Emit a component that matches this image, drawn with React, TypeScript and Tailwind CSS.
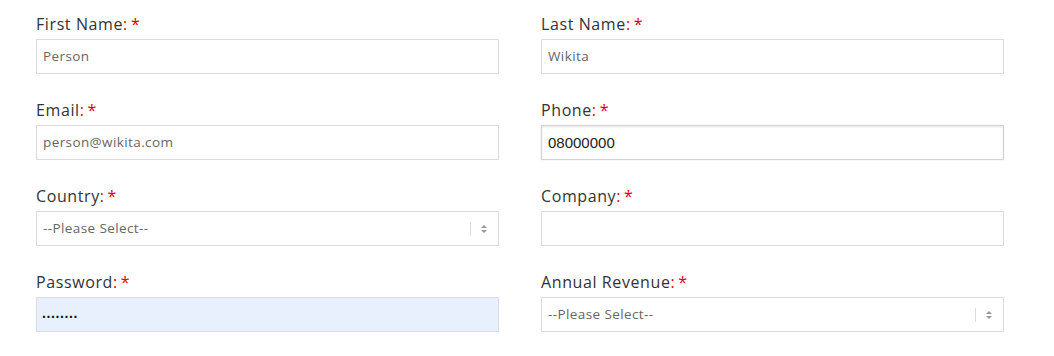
import React from "react";

type Field = {
  label: string;
  value?: string;
  kind?: "text" | "select" | "password" | "phone";
};

const fields: Field[] = [
  { label: "First Name", value: "Person" },
  { label: "Last Name", value: "Wikita" },
  { label: "Email", value: "person@wikita.com" },
  { label: "Phone", value: "08000000", kind: "phone" },
  { label: "Country", value: "--Please Select--", kind: "select" },
  { label: "Company", value: "" },
  { label: "Password", value: "........", kind: "password" },
  { label: "Annual Revenue", value: "--Please Select--", kind: "select" },
];

function Arrows() {
  return (
    <div className="flex h-full items-center">
      <span className="h-[14px] w-px bg-[#dcdcdc]" />
      <svg width="8" height="10" viewBox="0 0 8 10" className="ml-[9px] mr-[10px]">
        <path d="M1 4 L4 1 L7 4 Z" fill="#999" />
        <path d="M1 6 L4 9 L7 6 Z" fill="#999" />
      </svg>
    </div>
  );
}

function FormField({ f }: { f: Field }) {
  const base =
    "flex h-[35px] w-[463px] items-center border text-[13.5px] leading-none";
  let box = base + " border-[#dcdcdc] bg-white";
  if (f.kind === "password") box = base + " border-[#dcdcdc] bg-[#e8f0fe]";
  if (f.kind === "phone")
    box = base + " border-[#d3d3d3] bg-white shadow-[inset_0_1px_2px_rgba(0,0,0,0.12),0_0_2px_rgba(0,0,0,0.08)]";

  return (
    <div className="flex flex-col">
      <label className="mb-[4px] h-[22px] text-[16px] leading-[22px] tracking-[0.6px] text-[#333]">
        {f.label}
        <span className="text-[#e00000]">:</span>
        <span className="ml-[3px] text-[#e00000]">*</span>
      </label>
      <div className={box}>
        {f.kind === "phone" ? (
          <span className="pl-[6px] text-[15px] text-[#222] font-['Liberation_Sans',sans-serif]">
            {f.value}
          </span>
        ) : f.kind === "password" ? (
          <span className="pl-[5px] pb-[4px] text-[14px] font-bold tracking-[0.6px] text-[#111] font-['Liberation_Sans',sans-serif]">
            {f.value}
          </span>
        ) : (
          <span className="pl-[6px] tracking-[0.4px] text-[#666]">{f.value}</span>
        )}
        {f.kind === "select" && (
          <div className="ml-auto h-full">
            <Arrows />
          </div>
        )}
      </div>
    </div>
  );
}

export default function App() {
  return (
    <div className="h-[356px] w-[1054px] bg-white font-['Open_Sans',sans-serif]">
      <div className="grid grid-cols-[463px_463px] gap-x-[42px] gap-y-[25px] pl-[36px] pt-[13px]">
        {fields.map((f) => (
          <FormField key={f.label} f={f} />
        ))}
      </div>
    </div>
  );
}
